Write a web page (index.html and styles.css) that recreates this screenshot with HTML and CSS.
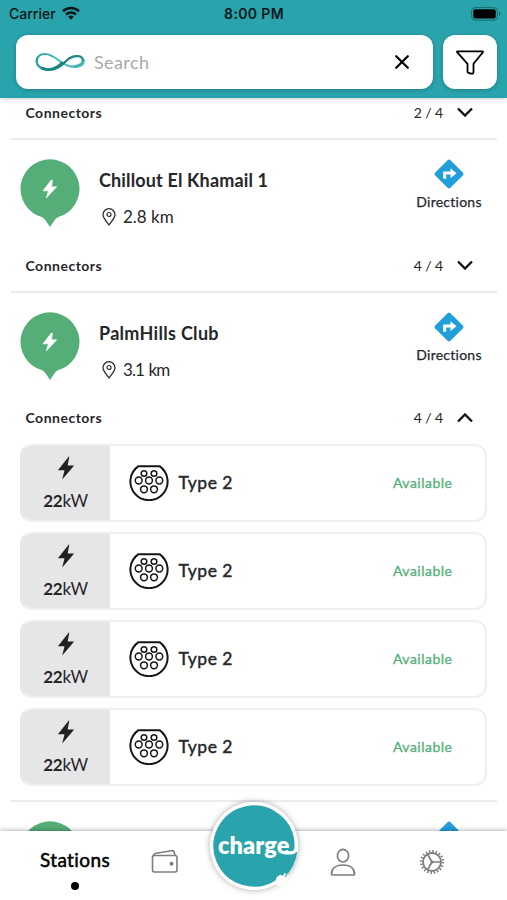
FILE: index.html
```html
<!DOCTYPE html>
<html lang="en">
<head>
<meta charset="utf-8">
<title>Stations</title>
<link rel="stylesheet" href="styles.css">
</head>
<body>
<svg class="defs" width="0" height="0" aria-hidden="true">
  <symbol id="bolt" viewBox="0 0 18 24"><path d="M11.800.5.900 14.200h6.600L5.200 23.500 17.200 9.400h-6.600L12.300.6z"/></symbol>
  <symbol id="pin" viewBox="0 0 60 68"><path d="M30 .3a29.500 29.500 0 0 1 8.300 57.800Q36 59 34 62l-4 6-4-6q-2-3-4.300-3.900A29.500 29.500 0 0 1 30 .3z" fill="#55ae77"/><path d="M31.300 21 23 31.800h5.400L26.300 39 36.700 27.800h-5.200L32.500 21.300z" fill="#fff" stroke="#fff" stroke-width=".6"/></symbol>
  <symbol id="place" viewBox="0 0 14 18"><path d="M7 17C4.500 13.200 1 10 1 6.700a6 6 0 0 1 12 0C13 10 9.500 13.200 7 17z" fill="none" stroke="#2b2d30" stroke-width="1.300"/><circle cx="7" cy="6.500" r="2" fill="none" stroke="#2b2d30" stroke-width="1.200"/></symbol>
  <symbol id="route" viewBox="0 0 30 30"><path d="M13.600 1.200q1.400-1.400 2.800 0l12.400 12.400q1.400 1.400 0 2.800L16.400 28.800q-1.400 1.400-2.800 0L1.200 16.400q-1.400-1.400 0-2.800z" fill="#219fdb"/><path d="M9.200 19.700v-7.100h7.300V9.200l6 5-6 4.800v-3.500h-4.300v4.200z" fill="#fff"/></symbol>
  <symbol id="down" viewBox="0 0 16 10"><path d="m1 1.500 7 7 7-7" fill="none" stroke="#151515" stroke-width="2.400"/></symbol>
  <symbol id="plug" viewBox="0 0 40 36"><g fill="none" stroke="#151515"><path d="M9.500 1.200h21A18.600 18.600 0 1 1 9.500 1.200z" stroke-width="2" stroke-linejoin="round"/><g stroke-width="1.500"><circle cx="15" cy="8.500" r="2.800"/><circle cx="25" cy="8.500" r="2.800"/><circle cx="9.700" cy="15.500" r="3.400"/><circle cx="20" cy="15.500" r="3.400"/><circle cx="30.300" cy="15.500" r="3.400"/><circle cx="15" cy="24.300" r="3.400"/><circle cx="25" cy="24.300" r="3.400"/></g></g></symbol>
</svg>
<div class="app">
  <header class="header">
    <div class="status">
      <div class="carrier"><span>Carrier</span>
        <svg width="18" height="14" viewBox="0 0 18 14"><g fill="none" stroke="#071719" stroke-width="2.600"><path d="M1 5.200a11.500 11.500 0 0 1 16 0"/><path d="M4 8.500a7.200 7.200 0 0 1 10 0"/></g><path d="M9 13.700 6.200 10.800a4 4 0 0 1 5.600 0z" fill="#071719"/></svg>
      </div>
      <span class="clock">8:00 PM</span>
      <svg class="battery" width="30" height="14" viewBox="0 0 30 14"><rect x=".6" y=".6" width="25.800" height="12.600" rx="3.500" fill="none" stroke="#176a70" stroke-width="1"/><rect x="2.300" y="2.300" width="22.400" height="9.200" rx="2" fill="#000"/><path d="M28 4.700q3 2.200 0 4.400z" fill="#176a70"/></svg>
    </div>
    <div class="tools">
      <div class="search">
        <svg class="loop" width="50" height="20" viewBox="0 0 50 20" fill="none" stroke-linecap="round">
          <defs>
            <linearGradient id="light" x1="0" x2="1"><stop offset="0" stop-color="#249c98"/><stop offset=".5" stop-color="#56c5c4"/><stop offset="1" stop-color="#3aafaf"/></linearGradient>
            <linearGradient id="dark" x1="0" x2="1"><stop offset="0" stop-color="#2ba7a6"/><stop offset=".55" stop-color="#137b73"/><stop offset="1" stop-color="#1e9088"/></linearGradient>
          </defs>
          <path d="M1.600 9C2 4.500 5.500 2 10 2c6.500 0 11.500 5 17 8.700 4 2.700 7.500 4 11.500 4 5.500 0 9.500-3 9.500-6.400" stroke="url(#light)" stroke-width="2.200"/>
          <path d="M40 14.500c5.500-.5 8.300-3 8.200-6" stroke="#43b5b5" stroke-width="3.200"/>
          <path d="M1.600 9c-.2 5 5.400 8.800 12.400 8.800 11 0 14.500-7.500 20.500-11.600C39.500 3 47.500 3.300 48.100 8" stroke="url(#dark)" stroke-width="2.200"/>
          <path d="M7 16.200c7 3 14 .8 20-5.200" stroke="#188982" stroke-width="2.900"/>
        </svg>
        <span class="placeholder">Search</span>
        <svg width="14" height="14" viewBox="0 0 14 14"><path d="m1.200 1.200 11.600 11.600M12.800 1.200 1.200 12.800" stroke="#000" stroke-width="2.200" stroke-linecap="round"/></svg>
      </div>
      <div class="filter"><svg width="28" height="25" viewBox="0 0 28 25"><path d="M1.500 1.300h25q.8 0 .4.900L17.500 13.800V22q0 2-2 1.700l-3-.7q-1-.3-1-1.500v-7.700L1.100 2.200q-.4-.9.400-.9z" fill="none" stroke="#000" stroke-width="1.800" stroke-linejoin="round"/></svg></div>
    </div>
  </header>

  <main class="list">
    <section class="station first">
      <div class="summary"><b class="label">Connectors</b><span class="count">2 / 4</span><svg class="chevron" width="16" height="10"><use href="#down"/></svg></div>
    </section>
    <section class="station">
      <div class="info">
        <svg class="marker" width="60" height="68"><use href="#pin"/></svg>
        <div class="text"><h2 class="name">Chillout El Khamail 1</h2><p class="distance"><svg width="14" height="18"><use href="#place"/></svg><span>2.8 km</span></p></div>
        <div class="directions"><svg width="30" height="30"><use href="#route"/></svg><span>Directions</span></div>
      </div>
      <div class="summary"><b class="label">Connectors</b><span class="count">4 / 4</span><svg class="chevron" width="16" height="10"><use href="#down"/></svg></div>
    </section>
    <section class="station open">
      <div class="info">
        <svg class="marker" width="60" height="68"><use href="#pin"/></svg>
        <div class="text"><h2 class="name palm">PalmHills Club</h2><p class="distance near"><svg width="14" height="18"><use href="#place"/></svg><span>3.1 km</span></p></div>
        <div class="directions"><svg width="30" height="30"><use href="#route"/></svg><span>Directions</span></div>
      </div>
      <div class="summary"><b class="label">Connectors</b><span class="count">4 / 4</span><svg class="chevron up" width="16" height="10"><use href="#down"/></svg></div>
      <div class="cards">
        <div class="card"><div class="power"><svg width="18" height="24"><use href="#bolt"/></svg><span><b>22</b>kW</span></div><svg class="plug" width="40" height="36"><use href="#plug"/></svg><span class="type">Type 2</span><span class="state">Available</span></div>
        <div class="card"><div class="power"><svg width="18" height="24"><use href="#bolt"/></svg><span><b>22</b>kW</span></div><svg class="plug" width="40" height="36"><use href="#plug"/></svg><span class="type">Type 2</span><span class="state">Available</span></div>
        <div class="card"><div class="power"><svg width="18" height="24"><use href="#bolt"/></svg><span><b>22</b>kW</span></div><svg class="plug" width="40" height="36"><use href="#plug"/></svg><span class="type">Type 2</span><span class="state">Available</span></div>
        <div class="card"><div class="power"><svg width="18" height="24"><use href="#bolt"/></svg><span><b>22</b>kW</span></div><svg class="plug" width="40" height="36"><use href="#plug"/></svg><span class="type">Type 2</span><span class="state">Available</span></div>
      </div>
    </section>
    <section class="station">
      <div class="info">
        <svg class="marker" width="60" height="68"><use href="#pin"/></svg>
        <div class="text"></div>
        <div class="directions"><svg width="30" height="30"><use href="#route"/></svg></div>
      </div>
    </section>
  </main>

  <nav class="tabs">
    <div class="tab active"><span>Stations</span><i class="dot"></i></div>
    <div class="tab"><svg width="28" height="26" viewBox="0 0 28 26" fill="none" stroke="#7d7d7d" stroke-width="1.600"><rect x="1.500" y="7.500" width="24.500" height="16.500" rx="2"/><path d="M2 7.700q.5-2 3-2.400L20.500 2.700q2.300-.4 2.800 1.700l.6 2.800"/><circle cx="20.500" cy="15.700" r="1.200" fill="#7d7d7d"/></svg></div>
    <div class="tab"></div>
    <div class="tab user"><svg width="26" height="28" viewBox="0 0 26 28" fill="none" stroke="#7d7d7d" stroke-width="1.700"><ellipse cx="13" cy="7.700" rx="5.600" ry="6.300"/><path d="M1.500 26.200C1.500 20 6.500 17 13 17s11.500 3 11.500 9.200q0 .8-.8.800H2.300q-.8 0-.8-.8z"/></svg></div>
    <div class="tab gear"><svg width="26" height="26" viewBox="0 0 26 26" fill="none" stroke="#7d7d7d"><circle cx="13" cy="13" r="9" stroke-width="1.800"/><circle cx="13" cy="13" r="10.900" stroke-width="2.300" stroke-dasharray="1.500 1.924"/><path d="M13 13h9M13 13 8.500 5.200M13 13l-4.500 7.800" stroke-width="1.700"/><circle cx="13" cy="13" r="1.500" fill="#7d7d7d" stroke="none"/></svg></div>
    <div class="charge">
      <svg width="88" height="88" viewBox="0 0 88 88"><circle cx="44" cy="44" r="42" fill="#29a3ac"/><path d="M86 50A42.400 42.400 0 0 1 74 74" fill="none" stroke="#29a3ac" stroke-width="2.500"/><path d="M74 50.800h7.500q4.700 0 4.700-6.800A42.200 42.200 0 1 0 68 78.700" fill="none" stroke="#fff" stroke-width="3.200"/><path d="m65.500 79 1.300-4 3.700-2.400 2 1.400 2.300-3.200 1.400 1-2.100 3.200 1.500 1.200 2.900-2.500 1.100 1.300-3 2.600.6 2.400-3.200 2.800-3.500.3-2.500.8-2.500-2z" fill="#fff"/></svg>
      <span>charge</span>
    </div>
  </nav>
</div>
</body>
</html>
```
FILE: styles.css
```css
* { box-sizing: border-box; }
body { margin: 0; font-family: Lato, "Liberation Sans", sans-serif; font-variant-ligatures: none; color: #25272a; background: #fff; }
.defs { position: absolute; }
.app { width: 507px; height: 900px; display: flex; flex-direction: column; overflow: hidden; }
svg { display: block; flex: none; }

.header { height: 98px; flex: none; background: #29a3ac; position: relative; z-index: 1; box-shadow: 0 1px 4px rgba(0,0,0,.2); }
.status { height: 28px; padding: 0 6px 0 9px; display: grid; grid-template-columns: 1fr auto 1fr; align-items: center; font: 500 14px/28px Inter, sans-serif; color: #071719; }
.carrier { display: flex; gap: 7px; align-items: center; }
.carrier svg { margin: -2px 0 0 -1px; }
.clock { font-weight: 600; letter-spacing: .35px; margin-right: 2px; }
.battery { justify-self: end; margin-top: -1px; }
.tools { display: flex; gap: 10px; padding: 7px 10px 0 15.500px; }
.search, .filter { height: 54px; background: #fff; border-radius: 12px; box-shadow: 0 1px 4px rgba(0,0,0,.22); display: flex; align-items: center; }
.search { width: 418px; padding: 0 24.500px 0 19px; }
.filter { width: 54px; justify-content: center; }
.placeholder { flex: 1; margin-left: 9.500px; font-size: 18px; letter-spacing: .4px; color: #aaa; }

.list { flex: 1; min-height: 0; overflow: hidden; padding: 0 10px 0 11px; }
.station { height: 152.700px; border-bottom: 2px solid #ececec; }
.open { height: 509.600px; }
.first { height: 42px; padding-top: 1px; }
.info { height: 112px; display: flex; align-items: flex-start; padding: 19px 15px 0 9px; }
.text { flex: 1; margin: 9px 0 0 19px; }
.name { margin: 0; font-size: 18px; line-height: 24px; font-weight: 700; letter-spacing: .15px; }
.palm { letter-spacing: .3px; }
.distance { margin: 14px 0 0 3px; display: flex; align-items: center; gap: 7px; font-size: 17px; line-height: 22px; }
.near { letter-spacing: -.9px; word-spacing: 1px; }
.directions { display: flex; flex-direction: column; align-items: center; gap: 4px; width: 66px; font-size: 14px; line-height: 18px; letter-spacing: .25px; -webkit-text-stroke: .25px; }
.summary { height: 26px; display: flex; align-items: center; padding: 0 24px 0 14.500px; }
.label { flex: 1; font-size: 14px; letter-spacing: .5px; }
.count { font-size: 14px; letter-spacing: -.1px; }
.chevron { margin-left: 14px; }
.up { transform: rotate(180deg); }
.cards { margin: 13px 10px 0 9px; display: flex; flex-direction: column; gap: 10px; }
.card { height: 78px; border: 2px solid #efefef; border-left-color: #e6e6e6; border-radius: 12px; overflow: hidden; display: flex; align-items: center; }
.power { width: 88px; height: 100%; background: #e6e6e6; display: flex; flex-direction: column; align-items: center; gap: 10px; padding: 10px 1px 0 0; font-size: 17px; line-height: 22px; letter-spacing: -.3px; fill: #202124; }
.plug { margin-left: 19px; }
.type { flex: 1; margin-left: 9.500px; font-size: 17.500px; letter-spacing: .5px; -webkit-text-stroke: .45px; }
.state { margin-right: 32.500px; font-size: 14px; letter-spacing: .5px; color: #55ae77; -webkit-text-stroke: .3px; }

.tabs { height: 69px; flex: none; position: relative; z-index: 2; background: #fff; box-shadow: 0 -1px 4px rgba(0,0,0,.28); display: grid; grid-template-columns: 151px 28px 151px 26px 63px 26px; }
.tab { padding-top: 17px; }
.gear { grid-column: 6; padding-top: 18px; }
.active { display: flex; flex-direction: column; align-items: center; padding: 16px 1px 0 0; font-size: 19px; line-height: 26px; letter-spacing: .4px; color: #000; -webkit-text-stroke: .5px; }
.dot { width: 8px; height: 8px; border-radius: 50%; background: #000; margin-top: 9px; }
.charge { position: absolute; left: 210px; top: -29px; width: 88px; height: 88px; border-radius: 50%; background: #fff; box-shadow: 0 0 6px rgba(0,0,0,.35); }
.charge span { position: absolute; left: 8px; top: 28px; font-size: 23.500px; line-height: 30px; font-weight: 800; letter-spacing: .1px; color: #fff; }
```
